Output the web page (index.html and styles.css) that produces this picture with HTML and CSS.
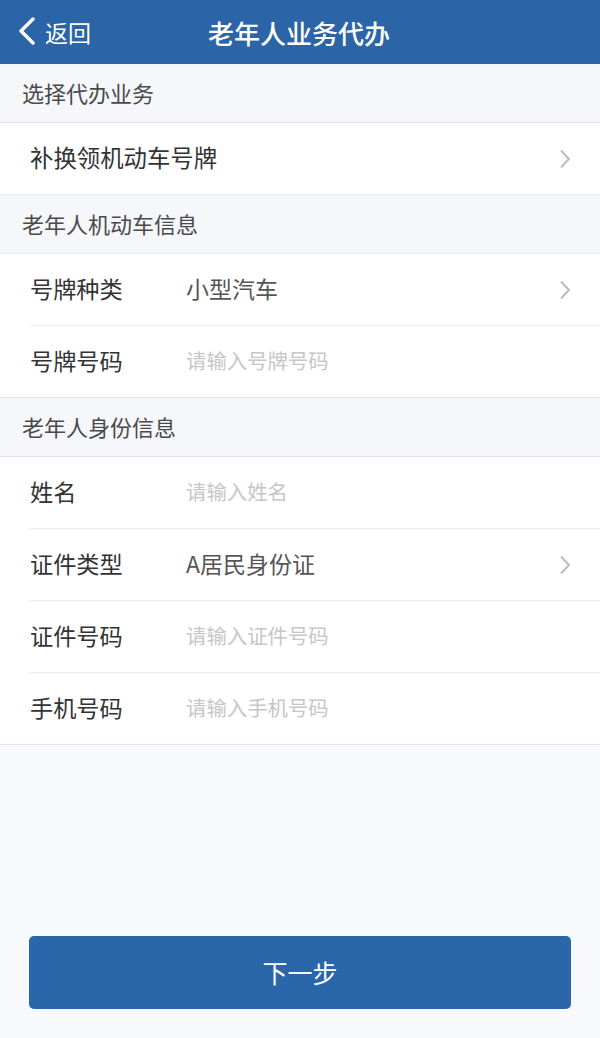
FILE: index.html
```html
<!DOCTYPE html>
<html lang="zh-CN">
<head>
<meta charset="utf-8">
<title>老年人业务代办</title>
<link rel="stylesheet" href="styles.css">
</head>
<body>
<div class="page">
  <header class="topbar">
    <div class="back">
      <svg class="back-icon" width="18" height="28" viewBox="0 0 18 28"><polyline points="15,2 3,14 15,26" fill="none" stroke="#fff" stroke-width="3.4" stroke-linecap="round" stroke-linejoin="round"/></svg>
      <span class="back-text">返回</span>
    </div>
    <div class="title">老年人业务代办</div>
  </header>

  <div class="section-title">选择代办业务</div>
  <div class="group">
    <div class="row">
      <div class="row-inner">
        <span class="biz">补换领机动车号牌</span>
        <svg class="chev" width="12" height="20" viewBox="0 0 12 20"><polyline points="2,1.5 10,10 2,18.5" fill="none" stroke="#bcbcbc" stroke-width="2"/></svg>
      </div>
    </div>
  </div>

  <div class="section-title">老年人机动车信息</div>
  <div class="group">
    <div class="row">
      <div class="row-inner">
        <span class="label">号牌种类</span>
        <span class="value">小型汽车</span>
        <svg class="chev" width="12" height="20" viewBox="0 0 12 20"><polyline points="2,1.5 10,10 2,18.5" fill="none" stroke="#bcbcbc" stroke-width="2"/></svg>
      </div>
    </div>
    <div class="row">
      <div class="row-inner">
        <span class="label">号牌号码</span>
        <span class="placeholder">请输入号牌号码</span>
      </div>
    </div>
  </div>

  <div class="section-title">老年人身份信息</div>
  <div class="group">
    <div class="row">
      <div class="row-inner">
        <span class="label">姓名</span>
        <span class="placeholder">请输入姓名</span>
      </div>
    </div>
    <div class="row">
      <div class="row-inner">
        <span class="label">证件类型</span>
        <span class="value">A居民身份证</span>
        <svg class="chev" width="12" height="20" viewBox="0 0 12 20"><polyline points="2,1.5 10,10 2,18.5" fill="none" stroke="#bcbcbc" stroke-width="2"/></svg>
      </div>
    </div>
    <div class="row">
      <div class="row-inner">
        <span class="label">证件号码</span>
        <span class="placeholder">请输入证件号码</span>
      </div>
    </div>
    <div class="row">
      <div class="row-inner">
        <span class="label">手机号码</span>
        <span class="placeholder">请输入手机号码</span>
      </div>
    </div>
  </div>

  <div class="footer">
    <button class="next-btn">下一步</button>
  </div>
</div>
</body>
</html>
```

FILE: styles.css
```css
* { box-sizing: border-box; }
html, body { margin: 0; padding: 0; }
body {
  font-family: "Noto Sans CJK SC", "Noto Sans", sans-serif;
  background: #f7f9fc;
  color: #333;
}
.page {
  width: 600px;
  height: 1038px;
  display: flex;
  flex-direction: column;
  background: #f7f9fc;
}
.topbar {
  height: 64px;
  background: #2c64a8;
  display: flex;
  align-items: center;
  position: relative;
  color: #fff;
  flex-shrink: 0;
}
.back {
  display: flex;
  align-items: center;
  padding-left: 18px;
  gap: 9px;
}
.back-icon { display: block; margin-top: -2px; }
.back-text {
  font-size: 23px;
  line-height: 1;
}
.title {
  position: absolute;
  left: 0;
  right: 0;
  top: 0;
  height: 64px;
  display: flex;
  align-items: center;
  justify-content: center;
  font-size: 26px;
  font-weight: 500;
  padding-right: 2px;
  pointer-events: none;
}
.section-title {
  height: 59px;
  display: flex;
  align-items: center;
  padding-left: 22px;
  padding-bottom: 2px;
  font-size: 22px;
  color: #4a4a4a;
  background: #f5f7fa;
  border-bottom: 1px solid #e3e5e8;
  flex-shrink: 0;
}
.group {
  background: #fff;
  border-bottom: 1px solid #e3e5e8;
  flex-shrink: 0;
}
.row { padding-left: 30px; }
.row-inner {
  height: 72px;
  display: flex;
  align-items: center;
  padding-right: 29px;
  padding-bottom: 3px;
  border-bottom: 1px solid #ebedf0;
}
.row:last-child .row-inner {
  height: 71px;
  border-bottom: none;
}
.biz {
  font-size: 23.4px;
  color: #333;
  flex: 1;
}
.label {
  width: 156px;
  font-size: 23.2px;
  color: #333;
  flex-shrink: 0;
}
.value {
  font-size: 23px;
  color: #555;
  flex: 1;
}
.placeholder {
  font-size: 20.4px;
  color: #c6c6c6;
  flex: 1;
}
.chev { display: block; flex-shrink: 0; margin-top: 3px; }
.footer {
  margin-top: auto;
  padding: 0 29px 29px 29px;
}
.next-btn {
  width: 100%;
  height: 73px;
  border: none;
  border-radius: 5px;
  background: #2b66aa;
  color: #fff;
  font-family: "Noto Sans CJK SC", "Noto Sans", sans-serif;
  font-size: 25px;
  padding: 0 0 2px 0;
}
```
